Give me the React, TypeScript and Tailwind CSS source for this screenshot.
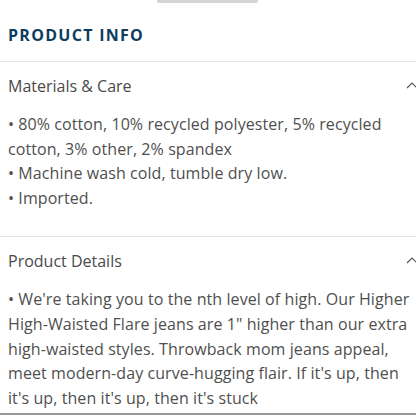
import React from "react";

function Chevron() {
  return (
    <svg width="12" height="7" viewBox="0 0 12 7" fill="none" className="shrink-0">
      <path d="M1 6L6 1L11 6" stroke="#555" strokeWidth="1.2" />
    </svg>
  );
}

function Section({ title, children }: { title: string; children: React.ReactNode }) {
  return (
    <div className="border-t border-[#e6e6e6]">
      <div className="flex items-center justify-between h-[47px] pl-2 pr-0">
        <span className="text-[16px] text-[#4a4a4a]">{title}</span>
        <div className="-mr-[2px]"><Chevron /></div>
      </div>
      <div className="pl-2 pr-0 mt-[3px] text-[16px] tracking-[0.005em] leading-[24.6px] text-[#4f4f4f]">{children}</div>
    </div>
  );
}

export default function App() {
  return (
    <div className="w-[416px] h-[416px] bg-white overflow-hidden relative" style={{ fontFamily: '"Open Sans", sans-serif' }}>
      <div className="flex justify-center">
        <div className="w-[101px] h-[3px] bg-[#d4d4d4] rounded-b-[2px] -ml-[2px]"></div>
      </div>
      <div className="h-[58px] flex items-center pl-2">
        <h2 className="text-[16px] font-bold tracking-[0.08em] text-[#0d3d5e] mt-[6px]">PRODUCT INFO</h2>
      </div>
      <Section title="Materials & Care">
        <div>• 80% cotton, 10% recycled polyester, 5% recycled cotton, 3% other, 2% spandex</div>
        <div>• Machine wash cold, tumble dry low.</div>
        <div>• Imported.</div>
        <div className="h-[26px]"></div>
      </Section>
      <Section title="Product Details">
        <div>• We're taking you to the nth level of high. Our Higher High-Waisted Flare jeans are 1" higher than our extra high-waisted styles. Throwback mom jeans appeal, meet modern-day curve-hugging flair. If it's up, then it's up, then it's up, then it's stuck</div>
      </Section>
      <div className="absolute left-0 right-0 top-[413px] h-[2px] bg-[#999]"></div>
    </div>
  );
}
